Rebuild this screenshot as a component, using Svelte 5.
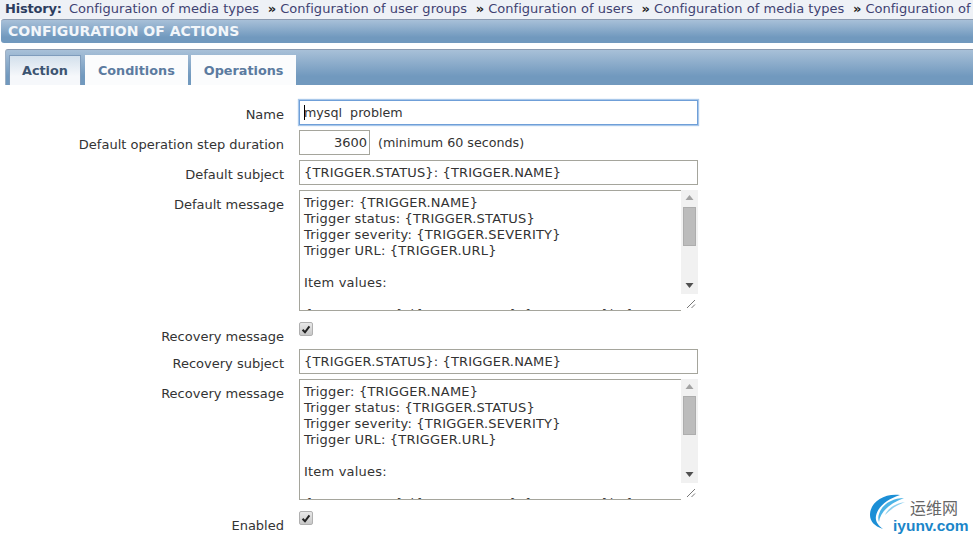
<script lang="ts">
  const history = [
    "Configuration of media types",
    "Configuration of user groups",
    "Configuration of users",
    "Configuration of media types",
    "Configuration of actions",
  ];
  const tabs = ["Action", "Conditions", "Operations"];
  const problem = `Trigger: {TRIGGER.NAME}
Trigger status: {TRIGGER.STATUS}
Trigger severity: {TRIGGER.SEVERITY}
Trigger URL: {TRIGGER.URL}

Item values:

{ITEM.NAME1} ({HOST.NAME1}:{ITEM.KEY1}): {ITEM.VALUE1}`;
</script>

{#snippet messageBox()}
  <div class="message">
    <textarea readonly value={problem}></textarea>
    <div class="scroll">
      <svg class="arrow" width="17" height="17" viewBox="0 0 17 17"><path d="M8.5 5l-4 5h8z" fill="#a3a3a3" /></svg>
      <div class="track"><div class="thumb"></div></div>
      <svg class="arrow" width="17" height="17" viewBox="0 0 17 17"><path d="M8.5 11l-4-5h8z" fill="#505050" /></svg>
      <svg class="grip" width="17" height="17" viewBox="0 0 17 17"><path d="M6 14l8-8M10.500 14l3.500-3.500" stroke="#777" fill="none" /></svg>
    </div>
  </div>
{/snippet}

{#snippet tick()}
  <span class="check">
    <svg width="13" height="13" viewBox="0 0 13 13"><path d="M2.800 6.800l2.600 2.700 4.800-6.300" fill="none" stroke="#222" stroke-width="2.200" /></svg>
  </span>
{/snippet}

<div class="page">
  <div class="history">
    <b>History:</b>
    {#each history as item, i}
      <span class="link">{item}</span>
      {#if i < history.length - 1}<span class="sep">»</span>{/if}
    {/each}
  </div>

  <div class="title">CONFIGURATION OF ACTIONS</div>

  <div class="tabs">
    {#each tabs as tab, i}
      <div class="tab" class:active={i === 0}>{tab}</div>
    {/each}
  </div>

  <div class="form">
    <div class="label">Name</div>
    <div class="field"><div class="input name"><span class="caret"></span>mysql&nbsp; problem</div></div>

    <div class="label">Default operation step duration</div>
    <div class="field step">
      <div class="input num">3600</div>
      <span class="hint">(minimum 60 seconds)</span>
    </div>

    <div class="label">Default subject</div>
    <div class="field"><div class="input tpl">{"{TRIGGER.STATUS}: {TRIGGER.NAME}"}</div></div>

    <div class="label">Default message</div>
    <div class="field">{@render messageBox()}</div>

    <div class="label low">Recovery message</div>
    <div class="field">{@render tick()}</div>

    <div class="label">Recovery subject</div>
    <div class="field"><div class="input tpl">{"{TRIGGER.STATUS}: {TRIGGER.NAME}"}</div></div>

    <div class="label">Recovery message</div>
    <div class="field">{@render messageBox()}</div>

    <div class="label low">Enabled</div>
    <div class="field">{@render tick()}</div>
  </div>

  <div class="logo">
    <svg width="46" height="46" viewBox="0 0 46 46">
      <path d="M30 2C14 0 0 9 0 22c0 6 4 11 13 14-5-4-8-8-7-13C8 13 18 6 30 2z" fill="#1c8fd6" />
      <path d="M34 5C23 5 12 11 9 21c-1 3-1 5 0 8 1-10 11-19 25-24z" fill="#4cb4e6" />
      <path d="M35 9c-9 1-17 6-20 13 6-6 12-10 20-13z" fill="#8ed0ef" />
    </svg>
    <div class="cn">运维网</div>
    <div class="en">iyunv.com</div>
  </div>
</div>

<style>
  :global(body) {
    margin: 0;
    background: #fff;
  }

  .page {
    position: relative;
    width: 973px;
    height: 541px;
    overflow: hidden;
    font-family: "DejaVu Sans", Verdana, sans-serif;
    font-size: 13px;
    color: #333;
    background: #fff;
  }

  .history {
    height: 19px;
    line-height: 17px;
    padding-left: 5px;
    white-space: nowrap;
    background: #eef1f6;
    color: #3f4272;
    letter-spacing: 0.03px;
  }

  .history b {
    color: #2d3d5f;
    margin-right: 3px;
    letter-spacing: -0.2px;
  }

  .sep {
    margin: 0 4px 0 4.5px;
    color: #222;
    font-weight: bold;
  }

  .title {
    height: 24px;
    box-sizing: border-box;
    margin-left: 1px;
    padding-left: 7px;
    line-height: 22px;
    font-size: 14px;
    font-weight: bold;
    color: #f2f6fa;
    border-top: 1px solid #8c9bb0;
    border-radius: 3px 0 0 3px;
    background: linear-gradient(#a8c0d8, #7199be 75%, #7199be);
  }

  .tabs {
    display: flex;
    gap: 3px;
    margin: 6px 0 0 5px;
    height: 36px;
    box-sizing: border-box;
    padding: 5px 0 0 3px;
    border-top: 1px solid #8c9bb0;
    border-left: 1px solid #9fb0c4;
    border-top-left-radius: 3px;
    background: linear-gradient(#a8c0d8, #7199be 75%, #7199be);
  }

  .tab {
    display: flex;
    align-items: center;
    padding: 0 13px;
    height: 30px;
    font-size: 12.8px;
    font-weight: bold;
    color: #5b7ba0;
    background: #fbfcfd;
  }

  .tab.active {
    box-sizing: border-box;
    margin-right: 1px;
    padding: 0 12px 1px;
    color: #3d5572;
    background: linear-gradient(#d3e0ec, #f6f8fb 70%);
    border: 1px solid #7f9cbc;
    border-bottom: none;
  }

  .form {
    display: grid;
    grid-template-columns: 284px 399px;
    column-gap: 15px;
    row-gap: 5px;
    margin-top: 15px;
  }

  .label {
    text-align: right;
    padding-top: 7px;
    line-height: 16px;
  }

  .label.low {
    padding-top: 13px;
    line-height: 15px;
  }

  .field {
    min-width: 0;
  }

  .step {
    display: flex;
    align-items: center;
    gap: 8px;
  }

  .hint {
    font-size: 12.7px;
  }

  .input {
    position: relative;
    box-sizing: border-box;
    width: 399px;
    height: 25px;
    padding-left: 4px;
    line-height: 23px;
    white-space: pre;
    background: #fff;
    border: 1px solid #a5a59c;
  }

  .input.tpl {
    letter-spacing: 0.16px;
  }

  .input.name {
    font-size: 12.7px;
    border: 1px solid #6f9fd8;
    box-shadow: 0 0 1px 1px #a9c8ea;
  }

  .caret {
    position: absolute;
    left: 4px;
    top: 4px;
    width: 1px;
    height: 15px;
    background: #000;
  }

  .input.num {
    width: 71px;
    text-align: right;
    padding: 0 2px 0 0;
  }

  .message {
    display: flex;
    box-sizing: border-box;
    width: 399px;
    height: 121px;
  }

  textarea {
    box-sizing: border-box;
    flex: 1;
    height: 121px;
    margin: 0;
    padding: 4px;
    font: inherit;
    letter-spacing: 0.2px;
    line-height: 16px;
    color: #333;
    border: 1px solid #a5a59c;
    border-right: none;
    border-radius: 0;
    outline: none;
    resize: none;
    overflow: hidden;
    white-space: pre;
  }

  .scroll {
    display: flex;
    flex-direction: column;
    width: 17px;
    background: #f1f1f1;
  }

  .arrow {
    display: block;
    flex: none;
  }

  .track {
    flex: 1;
  }

  .thumb {
    width: 13px;
    height: 39px;
    margin: 0 auto;
    background: #bcbcbc;
    border: 1px solid #adadad;
    box-sizing: border-box;
  }

  .grip {
    display: block;
    flex: none;
    background: #fff;
  }

  .check {
    display: flex;
    align-items: center;
    justify-content: center;
    box-sizing: border-box;
    width: 14px;
    height: 14px;
    margin-top: 6px;
    border: 1px solid #b0b0b0;
    border-radius: 2px;
    background: linear-gradient(#e8e8e8, #c8c8c8);
  }

  .logo {
    position: absolute;
    left: 870px;
    top: 493px;
    width: 103px;
    height: 48px;
  }

  .logo svg {
    position: absolute;
    left: 0;
    top: 0;
  }

  .cn {
    position: absolute;
    left: 40px;
    top: 4px;
    font-family: "Noto Sans CJK SC", sans-serif;
    font-size: 16px;
    line-height: 20px;
    color: #666;
  }

  .en {
    position: absolute;
    left: 23px;
    top: 23px;
    font-family: "Liberation Sans", sans-serif;
    font-weight: bold;
    font-size: 15.500px;
    line-height: 20px;
    color: #1b86c9;
  }
</style>
